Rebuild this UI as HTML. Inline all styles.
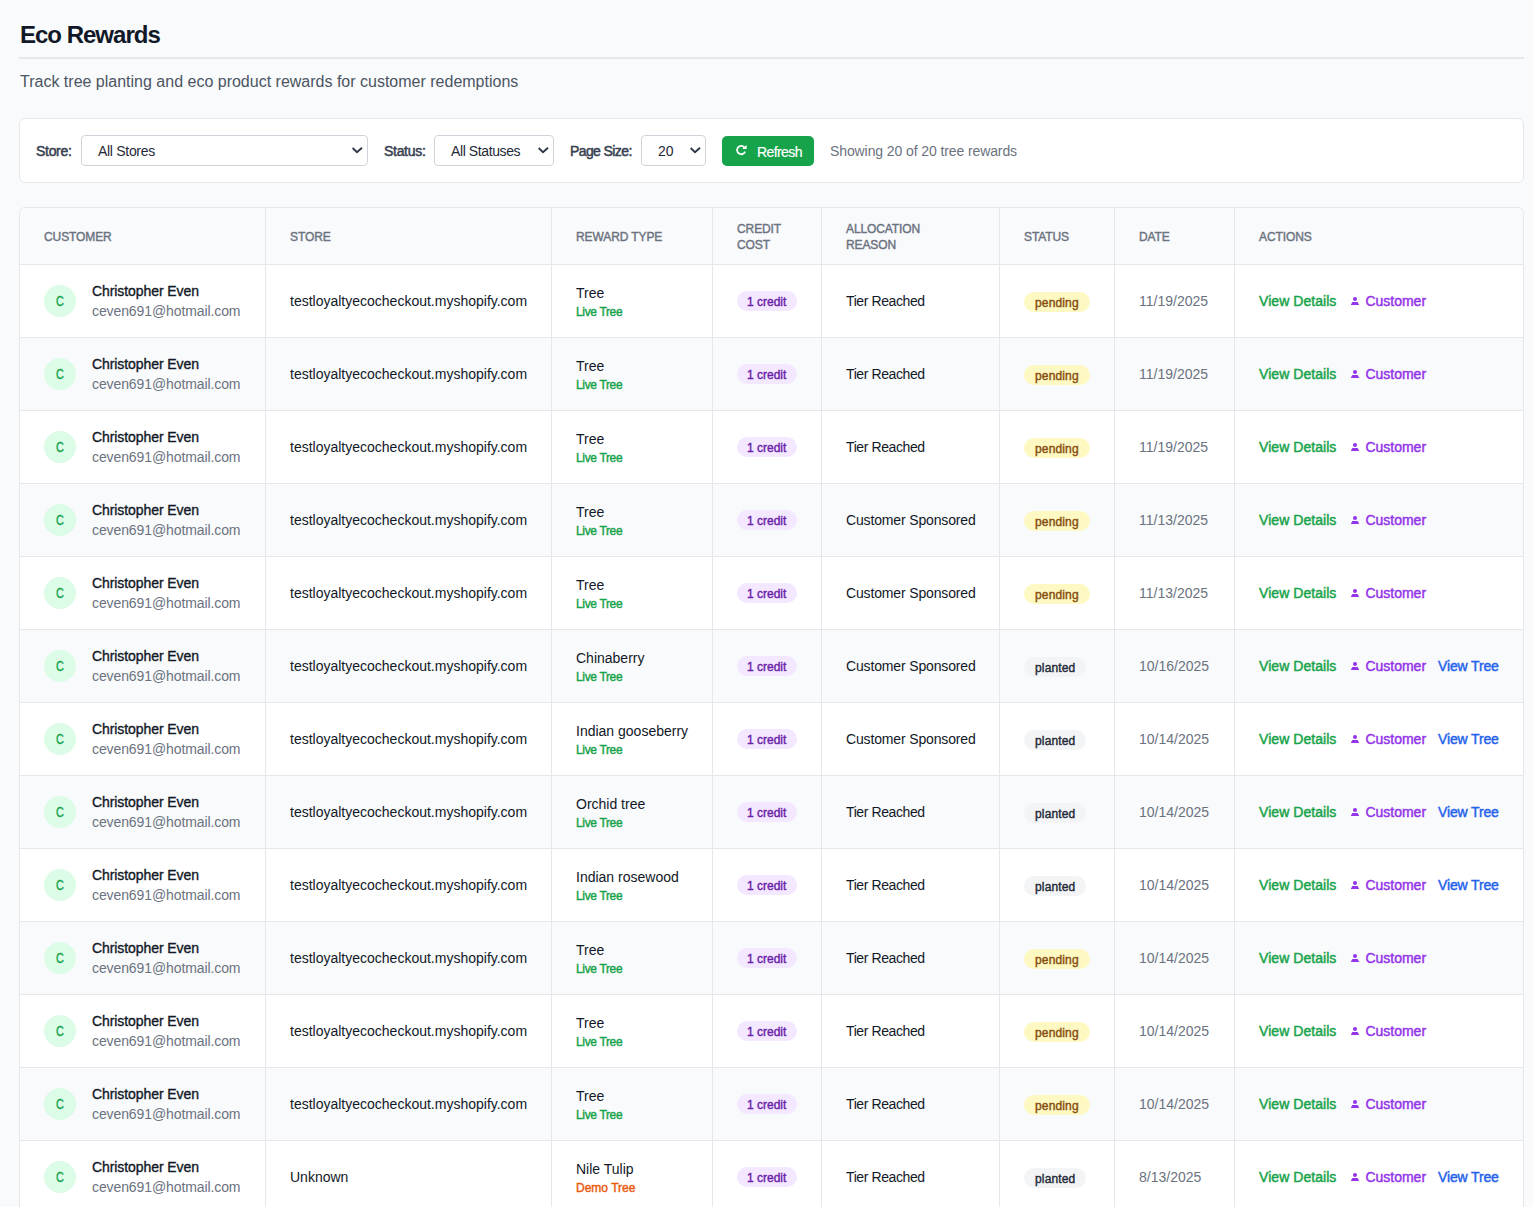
<!DOCTYPE html><html><head><meta charset="utf-8"><title>Eco Rewards</title><style>
*{box-sizing:border-box;margin:0;padding:0}
html{overflow:hidden}
html,body{background:#f9fafb;font-family:"Liberation Sans",sans-serif;color:#111827}
.wrap{position:relative;width:1533px;height:1207px}
h1{position:absolute;left:20px;top:20px;font-size:24px;line-height:30px;font-weight:bold;letter-spacing:-1px;color:#111827;white-space:nowrap}
.hr{position:absolute;left:19px;top:57px;width:1505px;height:2px;background:#e5e7eb}
.sub{position:absolute;left:20px;top:72px;font-size:16px;line-height:20px;color:#4b5563;white-space:nowrap}
.filters{position:absolute;left:19px;top:118px;width:1505px;height:65px;background:#fff;border:1px solid #e5e7eb;border-radius:6px}
.lbl{position:absolute;top:24px;font-size:14px;line-height:16px;font-weight:normal;-webkit-text-stroke:0.5px currentColor;color:#374151;white-space:nowrap}
.l1{left:16px;letter-spacing:-0.3px}.l2{left:364px;letter-spacing:-0.3px}.l3{left:550px;letter-spacing:-0.6px}
.sel{position:absolute;top:16px;height:31px;border:1px solid #d1d5db;border-radius:4px;background:#fff;font-size:14px;color:#1f2937}
.sel span{position:absolute;left:16px;top:7px;line-height:16px;white-space:nowrap}
.sel .chev{position:absolute;top:11px}
.s1{left:61px;width:287px}.s2{left:414px;width:120px}.s3{left:621px;width:65px}
.s1 span{letter-spacing:-0.3px}.s2 span{letter-spacing:-0.4px}
.s1 .chev{left:270px}.s2 .chev{left:103px}.s3 .chev{left:48px}
.btn{position:absolute;left:702px;top:17px;width:92px;height:30px;background:#16a34a;border-radius:5px;color:#fff;font-size:14px}
.btn svg{position:absolute;left:10px;top:5px}
.btn span{position:absolute;left:35px;top:8px;line-height:16px;letter-spacing:-0.6px;-webkit-text-stroke:0.2px currentColor}
.showing{position:absolute;left:810px;top:24px;font-size:14px;line-height:16px;color:#6b7280;white-space:nowrap;letter-spacing:-0.1px}
.tbl{position:absolute;left:19px;top:207px;width:1505px;border:1px solid #e5e7eb;border-bottom:none;border-radius:6px 6px 0 0;overflow:hidden;background:#fff}
table{border-collapse:separate;border-spacing:0;width:1503px;table-layout:fixed}
th{height:57px;background:#f9fafb;text-align:left;font-size:12px;font-weight:normal;-webkit-text-stroke:0.4px currentColor;color:#6b7280;text-transform:uppercase;letter-spacing:-0.1px;padding:1px 24px 0 24px;border-right:1px solid #e5e7eb;border-bottom:1px solid #e5e7eb;line-height:16px;vertical-align:middle;white-space:nowrap}
th:last-child,td:last-child{border-right:none}
td{height:73px;padding:0 24px;border-right:1px solid #e5e7eb;border-bottom:1px solid #e5e7eb;font-size:14px;line-height:20px;vertical-align:middle;color:#111827;white-space:nowrap;overflow:visible}
tbody tr:nth-child(even) td{background:#f9fafb}
.cust{display:flex;align-items:center}
.av{width:32px;height:32px;border-radius:50%;background:#dcfce7;color:#16a34a;font-weight:normal;-webkit-text-stroke:0.35px currentColor;font-size:14px;line-height:32px;text-align:center;margin-right:16px;flex:none}
.av span{display:inline-block;transform:scaleX(0.78)}
.nm{font-weight:normal;-webkit-text-stroke:0.35px currentColor;letter-spacing:-0.08px;line-height:20px}
.em{color:#6b7280;line-height:20px;letter-spacing:-0.1px}
.store{letter-spacing:0px}
.rt{line-height:21px}
.live,.demo{font-size:12px;font-weight:normal;-webkit-text-stroke:0.4px currentColor;line-height:16px;letter-spacing:-0.35px}
.live{color:#16a34a}.demo{color:#ea580c;letter-spacing:0px}
.cr{display:inline-block;vertical-align:middle;background:#f3e8ff;color:#6b21a8;font-size:12px;font-weight:normal;-webkit-text-stroke:0.4px currentColor;width:60px;padding-left:10px;height:20px;line-height:22px;border-radius:10px;letter-spacing:0px;position:relative;top:-1px}
.st{display:inline-block;vertical-align:middle;font-size:12px;font-weight:normal;-webkit-text-stroke:0.4px currentColor;padding-left:11px;height:20px;line-height:23px;border-radius:10px;letter-spacing:0.15px;position:relative;top:0px}
.pending{background:#fef9c3;color:#854d0e;width:66px}
.planted{background:#f3f4f6;color:#1f2937;width:62px}
.date{color:#6b7280}
.reason{letter-spacing:-0.4px}.reason.cs{letter-spacing:-0.15px}
.acts span{font-weight:normal;-webkit-text-stroke:0.45px currentColor;display:inline-block}
.vd{color:#16a34a;letter-spacing:0.05px;margin-right:14px}
.cu{color:#9333ea;letter-spacing:0px;margin-right:12px}
.vt{color:#2563eb;letter-spacing:-0.15px}
.uic{margin-right:5px;vertical-align:0px}

</style></head><body>
<div class="wrap">
<h1>Eco Rewards</h1><div class="hr"></div>
<p class="sub">Track tree planting and eco product rewards for customer redemptions</p>
<div class="filters">
<span class="lbl l1">Store:</span><div class="sel s1"><span>All Stores</span><svg class="chev" width="12" height="8" viewBox="0 0 12 8"><path d="M0.6 1 L5 5.2 L10 0.8" fill="none" stroke="#2d3748" stroke-width="1.9"/></svg></div>
<span class="lbl l2">Status:</span><div class="sel s2"><span>All Statuses</span><svg class="chev" width="12" height="8" viewBox="0 0 12 8"><path d="M0.6 1 L5 5.2 L10 0.8" fill="none" stroke="#2d3748" stroke-width="1.9"/></svg></div>
<span class="lbl l3">Page Size:</span><div class="sel s3"><span>20</span><svg class="chev" width="12" height="8" viewBox="0 0 12 8"><path d="M0.6 1 L5 5.2 L10 0.8" fill="none" stroke="#2d3748" stroke-width="1.9"/></svg></div>
<div class="btn"><svg width="20" height="18" viewBox="0 0 20 18"><path d="M12.65 6.72 A4.15 4.15 0 1 0 13.12 10.59" fill="none" stroke="#fff" stroke-width="1.8"/><path d="M14.6 3.9 L14.6 8.0 L10.3 8.0 Z" fill="#fff"/></svg><span>Refresh</span></div>
<span class="showing">Showing 20 of 20 tree rewards</span>
</div>
<div class="tbl"><table><colgroup><col style="width:246px"><col style="width:286px"><col style="width:161px"><col style="width:109px"><col style="width:178px"><col style="width:115px"><col style="width:120px"><col style="width:288px"></colgroup>
<thead><tr><th>Customer</th><th>Store</th><th>Reward Type</th><th class="two">Credit<br>Cost</th><th class="two">Allocation<br>Reason</th><th>Status</th><th>Date</th><th>Actions</th></tr></thead><tbody>
<tr>
<td><div class="cust"><div class="av"><span>C</span></div><div><div class="nm">Christopher Even</div><div class="em">ceven691@hotmail.com</div></div></div></td>
<td class="store">testloyaltyecocheckout.myshopify.com</td>
<td><div class="rt">Tree</div><div class="live">Live Tree</div></td>
<td><span class="cr">1 credit</span></td>
<td class="reason">Tier Reached</td>
<td><span class="st pending">pending</span></td>
<td class="date">11/19/2025</td>
<td class="acts"><span class="vd">View Details</span><span class="cu"><svg class="uic" width="10" height="10" viewBox="0 0 10 10"><circle cx="5" cy="3" r="2.05" fill="currentColor"/><path d="M2.4 6 L7.6 6 L9 8.5 Q9.1 9 8.5 9 L1.5 9 Q0.9 9 1 8.5 Z" fill="currentColor"/></svg>Customer</span></td>
</tr>
<tr>
<td><div class="cust"><div class="av"><span>C</span></div><div><div class="nm">Christopher Even</div><div class="em">ceven691@hotmail.com</div></div></div></td>
<td class="store">testloyaltyecocheckout.myshopify.com</td>
<td><div class="rt">Tree</div><div class="live">Live Tree</div></td>
<td><span class="cr">1 credit</span></td>
<td class="reason">Tier Reached</td>
<td><span class="st pending">pending</span></td>
<td class="date">11/19/2025</td>
<td class="acts"><span class="vd">View Details</span><span class="cu"><svg class="uic" width="10" height="10" viewBox="0 0 10 10"><circle cx="5" cy="3" r="2.05" fill="currentColor"/><path d="M2.4 6 L7.6 6 L9 8.5 Q9.1 9 8.5 9 L1.5 9 Q0.9 9 1 8.5 Z" fill="currentColor"/></svg>Customer</span></td>
</tr>
<tr>
<td><div class="cust"><div class="av"><span>C</span></div><div><div class="nm">Christopher Even</div><div class="em">ceven691@hotmail.com</div></div></div></td>
<td class="store">testloyaltyecocheckout.myshopify.com</td>
<td><div class="rt">Tree</div><div class="live">Live Tree</div></td>
<td><span class="cr">1 credit</span></td>
<td class="reason">Tier Reached</td>
<td><span class="st pending">pending</span></td>
<td class="date">11/19/2025</td>
<td class="acts"><span class="vd">View Details</span><span class="cu"><svg class="uic" width="10" height="10" viewBox="0 0 10 10"><circle cx="5" cy="3" r="2.05" fill="currentColor"/><path d="M2.4 6 L7.6 6 L9 8.5 Q9.1 9 8.5 9 L1.5 9 Q0.9 9 1 8.5 Z" fill="currentColor"/></svg>Customer</span></td>
</tr>
<tr>
<td><div class="cust"><div class="av"><span>C</span></div><div><div class="nm">Christopher Even</div><div class="em">ceven691@hotmail.com</div></div></div></td>
<td class="store">testloyaltyecocheckout.myshopify.com</td>
<td><div class="rt">Tree</div><div class="live">Live Tree</div></td>
<td><span class="cr">1 credit</span></td>
<td class="reason cs">Customer Sponsored</td>
<td><span class="st pending">pending</span></td>
<td class="date">11/13/2025</td>
<td class="acts"><span class="vd">View Details</span><span class="cu"><svg class="uic" width="10" height="10" viewBox="0 0 10 10"><circle cx="5" cy="3" r="2.05" fill="currentColor"/><path d="M2.4 6 L7.6 6 L9 8.5 Q9.1 9 8.5 9 L1.5 9 Q0.9 9 1 8.5 Z" fill="currentColor"/></svg>Customer</span></td>
</tr>
<tr>
<td><div class="cust"><div class="av"><span>C</span></div><div><div class="nm">Christopher Even</div><div class="em">ceven691@hotmail.com</div></div></div></td>
<td class="store">testloyaltyecocheckout.myshopify.com</td>
<td><div class="rt">Tree</div><div class="live">Live Tree</div></td>
<td><span class="cr">1 credit</span></td>
<td class="reason cs">Customer Sponsored</td>
<td><span class="st pending">pending</span></td>
<td class="date">11/13/2025</td>
<td class="acts"><span class="vd">View Details</span><span class="cu"><svg class="uic" width="10" height="10" viewBox="0 0 10 10"><circle cx="5" cy="3" r="2.05" fill="currentColor"/><path d="M2.4 6 L7.6 6 L9 8.5 Q9.1 9 8.5 9 L1.5 9 Q0.9 9 1 8.5 Z" fill="currentColor"/></svg>Customer</span></td>
</tr>
<tr>
<td><div class="cust"><div class="av"><span>C</span></div><div><div class="nm">Christopher Even</div><div class="em">ceven691@hotmail.com</div></div></div></td>
<td class="store">testloyaltyecocheckout.myshopify.com</td>
<td><div class="rt">Chinaberry</div><div class="live">Live Tree</div></td>
<td><span class="cr">1 credit</span></td>
<td class="reason cs">Customer Sponsored</td>
<td><span class="st planted">planted</span></td>
<td class="date">10/16/2025</td>
<td class="acts"><span class="vd">View Details</span><span class="cu"><svg class="uic" width="10" height="10" viewBox="0 0 10 10"><circle cx="5" cy="3" r="2.05" fill="currentColor"/><path d="M2.4 6 L7.6 6 L9 8.5 Q9.1 9 8.5 9 L1.5 9 Q0.9 9 1 8.5 Z" fill="currentColor"/></svg>Customer</span><span class="vt">View Tree</span></td>
</tr>
<tr>
<td><div class="cust"><div class="av"><span>C</span></div><div><div class="nm">Christopher Even</div><div class="em">ceven691@hotmail.com</div></div></div></td>
<td class="store">testloyaltyecocheckout.myshopify.com</td>
<td><div class="rt">Indian gooseberry</div><div class="live">Live Tree</div></td>
<td><span class="cr">1 credit</span></td>
<td class="reason cs">Customer Sponsored</td>
<td><span class="st planted">planted</span></td>
<td class="date">10/14/2025</td>
<td class="acts"><span class="vd">View Details</span><span class="cu"><svg class="uic" width="10" height="10" viewBox="0 0 10 10"><circle cx="5" cy="3" r="2.05" fill="currentColor"/><path d="M2.4 6 L7.6 6 L9 8.5 Q9.1 9 8.5 9 L1.5 9 Q0.9 9 1 8.5 Z" fill="currentColor"/></svg>Customer</span><span class="vt">View Tree</span></td>
</tr>
<tr>
<td><div class="cust"><div class="av"><span>C</span></div><div><div class="nm">Christopher Even</div><div class="em">ceven691@hotmail.com</div></div></div></td>
<td class="store">testloyaltyecocheckout.myshopify.com</td>
<td><div class="rt">Orchid tree</div><div class="live">Live Tree</div></td>
<td><span class="cr">1 credit</span></td>
<td class="reason">Tier Reached</td>
<td><span class="st planted">planted</span></td>
<td class="date">10/14/2025</td>
<td class="acts"><span class="vd">View Details</span><span class="cu"><svg class="uic" width="10" height="10" viewBox="0 0 10 10"><circle cx="5" cy="3" r="2.05" fill="currentColor"/><path d="M2.4 6 L7.6 6 L9 8.5 Q9.1 9 8.5 9 L1.5 9 Q0.9 9 1 8.5 Z" fill="currentColor"/></svg>Customer</span><span class="vt">View Tree</span></td>
</tr>
<tr>
<td><div class="cust"><div class="av"><span>C</span></div><div><div class="nm">Christopher Even</div><div class="em">ceven691@hotmail.com</div></div></div></td>
<td class="store">testloyaltyecocheckout.myshopify.com</td>
<td><div class="rt">Indian rosewood</div><div class="live">Live Tree</div></td>
<td><span class="cr">1 credit</span></td>
<td class="reason">Tier Reached</td>
<td><span class="st planted">planted</span></td>
<td class="date">10/14/2025</td>
<td class="acts"><span class="vd">View Details</span><span class="cu"><svg class="uic" width="10" height="10" viewBox="0 0 10 10"><circle cx="5" cy="3" r="2.05" fill="currentColor"/><path d="M2.4 6 L7.6 6 L9 8.5 Q9.1 9 8.5 9 L1.5 9 Q0.9 9 1 8.5 Z" fill="currentColor"/></svg>Customer</span><span class="vt">View Tree</span></td>
</tr>
<tr>
<td><div class="cust"><div class="av"><span>C</span></div><div><div class="nm">Christopher Even</div><div class="em">ceven691@hotmail.com</div></div></div></td>
<td class="store">testloyaltyecocheckout.myshopify.com</td>
<td><div class="rt">Tree</div><div class="live">Live Tree</div></td>
<td><span class="cr">1 credit</span></td>
<td class="reason">Tier Reached</td>
<td><span class="st pending">pending</span></td>
<td class="date">10/14/2025</td>
<td class="acts"><span class="vd">View Details</span><span class="cu"><svg class="uic" width="10" height="10" viewBox="0 0 10 10"><circle cx="5" cy="3" r="2.05" fill="currentColor"/><path d="M2.4 6 L7.6 6 L9 8.5 Q9.1 9 8.5 9 L1.5 9 Q0.9 9 1 8.5 Z" fill="currentColor"/></svg>Customer</span></td>
</tr>
<tr>
<td><div class="cust"><div class="av"><span>C</span></div><div><div class="nm">Christopher Even</div><div class="em">ceven691@hotmail.com</div></div></div></td>
<td class="store">testloyaltyecocheckout.myshopify.com</td>
<td><div class="rt">Tree</div><div class="live">Live Tree</div></td>
<td><span class="cr">1 credit</span></td>
<td class="reason">Tier Reached</td>
<td><span class="st pending">pending</span></td>
<td class="date">10/14/2025</td>
<td class="acts"><span class="vd">View Details</span><span class="cu"><svg class="uic" width="10" height="10" viewBox="0 0 10 10"><circle cx="5" cy="3" r="2.05" fill="currentColor"/><path d="M2.4 6 L7.6 6 L9 8.5 Q9.1 9 8.5 9 L1.5 9 Q0.9 9 1 8.5 Z" fill="currentColor"/></svg>Customer</span></td>
</tr>
<tr>
<td><div class="cust"><div class="av"><span>C</span></div><div><div class="nm">Christopher Even</div><div class="em">ceven691@hotmail.com</div></div></div></td>
<td class="store">testloyaltyecocheckout.myshopify.com</td>
<td><div class="rt">Tree</div><div class="live">Live Tree</div></td>
<td><span class="cr">1 credit</span></td>
<td class="reason">Tier Reached</td>
<td><span class="st pending">pending</span></td>
<td class="date">10/14/2025</td>
<td class="acts"><span class="vd">View Details</span><span class="cu"><svg class="uic" width="10" height="10" viewBox="0 0 10 10"><circle cx="5" cy="3" r="2.05" fill="currentColor"/><path d="M2.4 6 L7.6 6 L9 8.5 Q9.1 9 8.5 9 L1.5 9 Q0.9 9 1 8.5 Z" fill="currentColor"/></svg>Customer</span></td>
</tr>
<tr>
<td><div class="cust"><div class="av"><span>C</span></div><div><div class="nm">Christopher Even</div><div class="em">ceven691@hotmail.com</div></div></div></td>
<td class="store">Unknown</td>
<td><div class="rt">Nile Tulip</div><div class="demo">Demo Tree</div></td>
<td><span class="cr">1 credit</span></td>
<td class="reason">Tier Reached</td>
<td><span class="st planted">planted</span></td>
<td class="date">8/13/2025</td>
<td class="acts"><span class="vd">View Details</span><span class="cu"><svg class="uic" width="10" height="10" viewBox="0 0 10 10"><circle cx="5" cy="3" r="2.05" fill="currentColor"/><path d="M2.4 6 L7.6 6 L9 8.5 Q9.1 9 8.5 9 L1.5 9 Q0.9 9 1 8.5 Z" fill="currentColor"/></svg>Customer</span><span class="vt">View Tree</span></td>
</tr>
<tr>
<td><div class="cust"><div class="av"><span>C</span></div><div><div class="nm">Christopher Even</div><div class="em">ceven691@hotmail.com</div></div></div></td>
<td class="store">testloyaltyecocheckout.myshopify.com</td>
<td><div class="rt">Tree</div><div class="live">Live Tree</div></td>
<td><span class="cr">1 credit</span></td>
<td class="reason">Tier Reached</td>
<td><span class="st pending">pending</span></td>
<td class="date">10/14/2025</td>
<td class="acts"><span class="vd">View Details</span><span class="cu"><svg class="uic" width="10" height="10" viewBox="0 0 10 10"><circle cx="5" cy="3" r="2.05" fill="currentColor"/><path d="M2.4 6 L7.6 6 L9 8.5 Q9.1 9 8.5 9 L1.5 9 Q0.9 9 1 8.5 Z" fill="currentColor"/></svg>Customer</span></td>
</tr>
</tbody></table></div></div></body></html>
